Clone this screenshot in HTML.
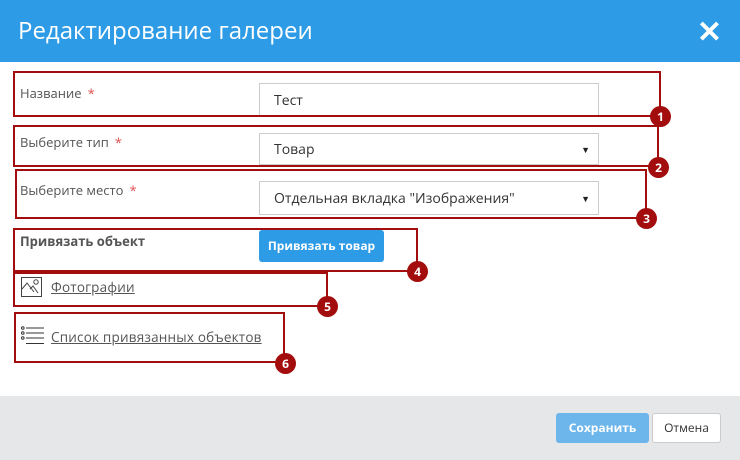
<!DOCTYPE html><html><head><meta charset="utf-8"><style>
body{margin:0;width:740px;height:460px;overflow:hidden;background:#fff;font-family:"Open Sans","Liberation Sans",sans-serif;position:relative}
.a{position:absolute;box-sizing:border-box}
.hd{left:0;top:0;width:740px;height:62px;background:#2e9be6;color:#fff;font-size:24px;line-height:62px;padding-left:18px}
.x{right:18px;top:14px;color:#fff;font-size:30px;font-weight:bold;line-height:34px}
.box{border:2px solid #a30d0d}
.c{width:21px;height:21px;border-radius:50%;background:#a30d0d;color:#fff;font-size:12px;font-weight:bold;text-align:center;line-height:21px;margin:-10px 0 0 -10px}
.lb{font-size:13px;color:#555}
.lb b{color:#e05050;font-weight:normal;margin-left:6px}
.in{border:1px solid #ccc;background:#fff;font-size:14px;color:#333;padding-left:14px}
.ar{position:absolute;right:8px;top:0;font-size:9px;color:#222}
.ln{font-size:13.5px;color:#555;text-decoration:underline;letter-spacing:0.2px}
.ft{left:0;top:396px;width:740px;height:64px;background:#e6e7e9}
</style></head><body>
<div class="a hd">Редактирование галереи</div>
<div class="a x">✕</div>

<div class="a lb" style="left:20px;top:84px">Название<b>*</b></div>
<div class="a in" style="left:259px;top:83px;width:340px;height:34px;line-height:34px">Тест</div>
<div class="a lb" style="left:20px;top:133px">Выберите тип<b>*</b></div>
<div class="a in" style="left:259px;top:133px;width:340px;height:32px;line-height:32px">Товар<span class="ar">▼</span></div>
<div class="a lb" style="left:20px;top:181px">Выберите место<b>*</b></div>
<div class="a in" style="left:259px;top:181px;width:340px;height:34px;line-height:34px">Отдельная вкладка "Изображения"<span class="ar">▼</span></div>
<div class="a lb" style="left:20px;top:232px;font-weight:bold">Привязать объект</div>
<div class="a" style="left:259px;top:230px;width:125px;height:32px;background:#2e9be6;border-radius:3px;color:#fff;font-size:12px;font-weight:bold;text-align:center;line-height:32px">Привязать товар</div>

<svg class="a" style="left:21px;top:277px" width="21" height="20" viewBox="0 0 21 20" fill="none" stroke="#444" stroke-width="1"><rect x="0.5" y="0.5" width="20" height="19"/><path d="M1 12l5-6 7 9M9 12l3-3 5 7"/><circle cx="15" cy="5" r="2.2"/></svg>
<div class="a ln" style="left:51px;top:278px">Фотографии</div>
<svg class="a" style="left:21px;top:326px" width="23" height="20" viewBox="0 0 23 20" stroke="#333" fill="none"><circle cx="1.8" cy="2" r="1.3"/><circle cx="1.8" cy="7" r="1.3"/><circle cx="1.8" cy="12" r="1.3"/><path d="M5 2h18M5 7h18M5 12h18M5 17.5h18"/></svg>
<div class="a ln" style="left:51px;top:328px">Список привязанных объектов</div>

<div class="a box" style="left:13px;top:71px;width:648px;height:46px"></div>
<div class="a box" style="left:13px;top:125px;width:646px;height:42px"></div>
<div class="a box" style="left:15px;top:169px;width:632px;height:50px"></div>
<div class="a box" style="left:13px;top:228px;width:405px;height:44px"></div>
<div class="a box" style="left:13px;top:272px;width:315px;height:35px"></div>
<div class="a box" style="left:14px;top:312px;width:271px;height:51px"></div>
<div class="a c" style="left:660px;top:116px">1</div>
<div class="a c" style="left:658px;top:167px">2</div>
<div class="a c" style="left:646px;top:218px">3</div>
<div class="a c" style="left:417px;top:271px">4</div>
<div class="a c" style="left:327px;top:306px">5</div>
<div class="a c" style="left:285px;top:363px">6</div>

<div class="a ft"></div>
<div class="a" style="left:556px;top:413px;width:93px;height:30px;background:#6db6ec;border-radius:3px;color:#fff;font-size:12px;font-weight:bold;text-align:center;line-height:30px">Сохранить</div>
<div class="a" style="left:652px;top:413px;width:69px;height:30px;background:#fff;border:1px solid #ccc;border-radius:3px;color:#333;font-size:12px;text-align:center;line-height:28px">Отмена</div>
</body></html>
